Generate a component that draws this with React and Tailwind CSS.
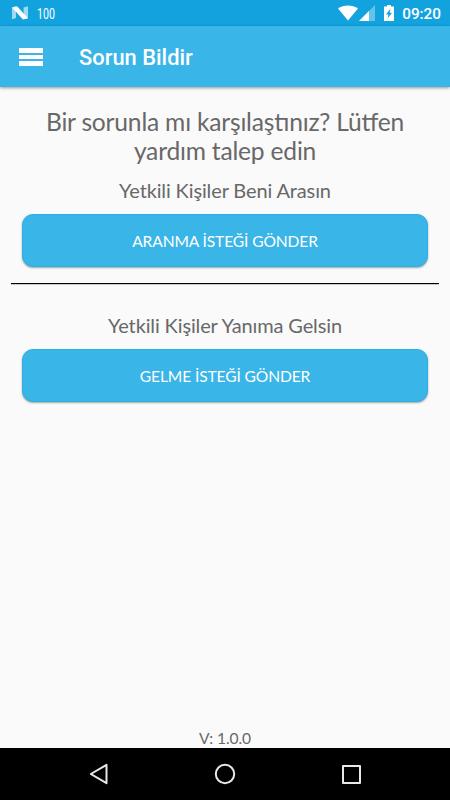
import React from 'react';

const StatusBar = () => (
    <div className="h-[26px] shrink-0 bg-[#12a3df] flex items-center justify-between pl-[11px] pr-[9px] text-white font-[Roboto,sans-serif]">
        <div className="flex items-center">
            <svg width="18" height="14" viewBox="0 0 18 14">
                <path d="M1 1.6 L5 0.2 V12 L1 13.2 Z" fill="#fff" opacity="0.6" />
                <path d="M12.6 1.6 L17 0.2 V12 L12.6 13.2 Z" fill="#fff" opacity="0.6" />
                <path d="M1 1.4 L6 0.2 L17 12.2 L12 13.4 Z" fill="#fff" />
            </svg>
            <span className="ml-[8px] pt-px text-[14px] leading-none origin-left scale-x-[0.76]">100</span>
        </div>
        <div className="flex items-center">
            <svg width="20" height="16" viewBox="0 0 20 16" fill="#fff">
                <path d="M0 3.6 C5.5 -0.7 14.5 -0.7 20 3.6 L10 15.6 Z" />
            </svg>
            <svg className="ml-[1px]" width="16" height="16" viewBox="0 0 16 16" fill="#fff">
                <path d="M16 0 V16 H0 Z" opacity="0.35" />
                <path d="M10 6 V16 H0 Z" />
            </svg>
            <svg className="ml-[9px]" width="10" height="16" viewBox="0 0 10 16">
                <path d="M3 0 H7 V1.5 H10 V16 H0 V1.5 H3 Z" fill="#fff" />
                <path d="M6.6 3.6 L2 9.4 H4.4 L3.6 13.6 L8 7.8 H5.6 Z" fill="#12a3df" />
            </svg>
            <span className="ml-[8px] pt-[3px] text-[15.3px] leading-none font-medium">09:20</span>
        </div>
    </div>
);

const AppBar = () => (
    <header className="h-[61px] shrink-0 bg-[#39b5e7] flex items-center pl-[19px] shadow-[0_1px_3px_rgba(0,0,0,0.4)]">
        <button type="button" aria-label="Menu" className="w-6 flex flex-col gap-[2px]">
            <span className="h-[5px] bg-white"></span>
            <span className="h-[4px] bg-white"></span>
            <span className="h-[5px] bg-white"></span>
        </button>
        <h1 className="ml-[36px] pt-[4px] text-[21.9px] font-medium text-white font-[Roboto,sans-serif]">Sorun Bildir</h1>
    </header>
);

const RequestButton = ({ children }) => (
    <button
        type="button"
        className="w-full h-[53px] pt-[2px] rounded-[11px] border border-[#2bb0e5] bg-[#39b5e7] text-white text-[15.6px] tracking-[-0.13px] shadow-[0_1px_2px_rgba(0,0,0,0.35)]"
    >
        {children}
    </button>
);

const NavBar = () => (
    <nav className="h-[52px] shrink-0 bg-black flex items-center justify-between pl-[88px] pr-[88px]">
        <svg width="22" height="22" viewBox="0 0 22 22" fill="none" stroke="#e8e8e8" strokeWidth="2" strokeLinejoin="round">
            <path d="M18.5 1.8 V20.2 L2.8 11 Z" />
        </svg>
        <svg width="22" height="22" viewBox="0 0 22 22" fill="none" stroke="#e8e8e8" strokeWidth="2">
            <circle cx="11" cy="11" r="9.2" />
        </svg>
        <svg width="22" height="22" viewBox="0 0 22 22" fill="none" stroke="#e8e8e8" strokeWidth="2" strokeLinejoin="round">
            <rect x="3" y="3" width="17" height="17" />
        </svg>
    </nav>
);

const App = () => {
    return (
        <div className="w-[450px] h-[800px] flex flex-col overflow-hidden bg-[#fafafa] text-[#686868] font-[Lato,sans-serif] [font-feature-settings:'liga'_1,'clig'_1]">
            <StatusBar />
            <AppBar />

            <main className="flex-1 flex flex-col text-center px-[11px] pt-[20px]">
                <h2 className="px-[11px] text-[24.6px] leading-[29px] tracking-[-0.2px]">Bir sorunla mı karşılaştınız? Lütfen yardım talep edin</h2>

                <section className="px-[11px] mt-[13px]">
                    <p className="text-[20px] leading-6 tracking-[-0.13px] mb-[12px]">Yetkili Kişiler Beni Arasın</p>
                    <RequestButton>ARANMA İSTEĞİ GÖNDER</RequestButton>
                </section>

                <hr className="mt-[16px] border-t border-black shadow-[0_1px_0_rgba(0,0,0,0.2)]" />

                <section className="px-[11px] mt-[29px]">
                    <p className="text-[20px] leading-6 tracking-[-0.13px] mb-[12px]">Yetkili Kişiler Yanıma Gelsin</p>
                    <RequestButton>GELME İSTEĞİ GÖNDER</RequestButton>
                </section>

                <p className="mt-auto text-[15.6px] leading-[20px] tracking-[-0.1px]">V: 1.0.0</p>
            </main>

            <NavBar />
        </div>
    );
};

export default App;
